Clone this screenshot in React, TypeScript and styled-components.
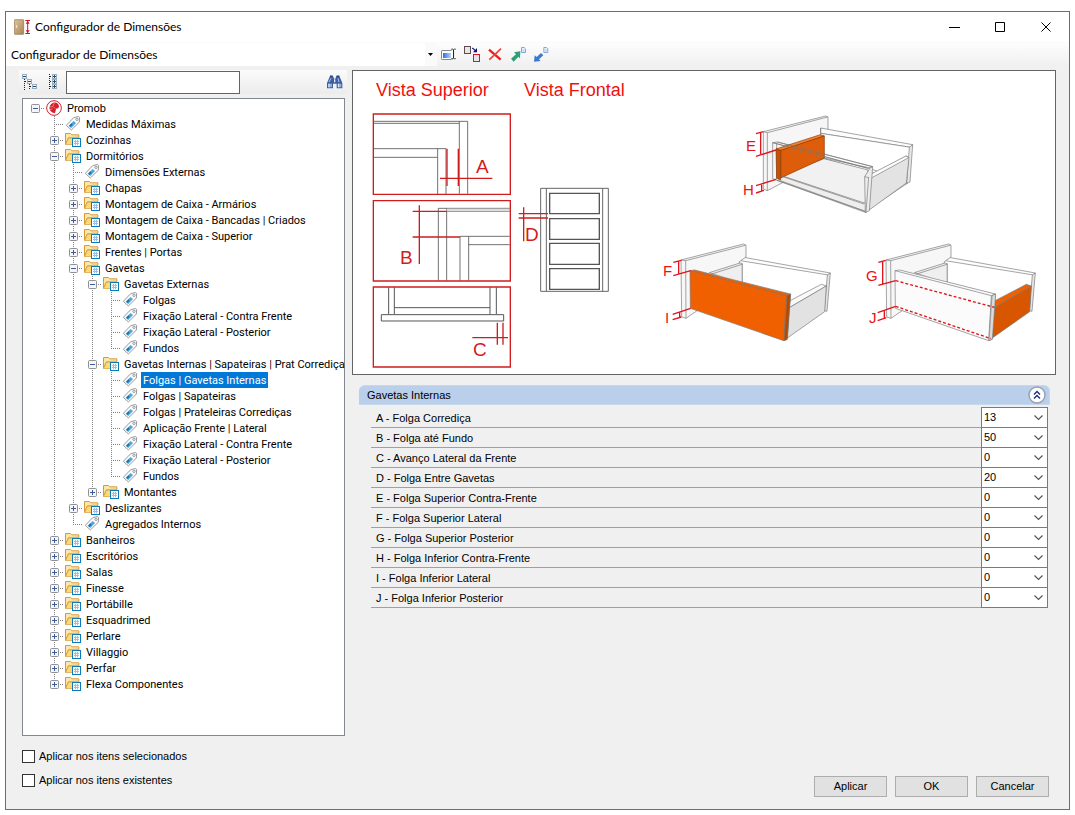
import React, { useState } from 'react';
import styled, { createGlobalStyle } from 'styled-components';

const GlobalStyle = createGlobalStyle`
  *, *::before, *::after { box-sizing: border-box; }
  body {
    margin: 0;
    background: #fff;
    color: #000;
    font: 11px/16px "Liberation Sans", Arial, sans-serif;
  }
  button, input, select { font: inherit; color: inherit; margin: 0; }
`;

const captionFont = 'Lato, "Segoe UI", sans-serif';
const treeFont = 'Roboto, Arial, sans-serif';

/* ---------- window frame ---------- */

const Page = styled.div`
  display: flex;
  min-height: 100vh;
  padding: 11px 5px 5px;
`;

const Window = styled.main`
  flex: 1;
  min-width: 0;
  display: flex;
  flex-direction: column;
  border: 1px solid #1883d7;
  background: #f0f0f0;
`;

const TitleBar = styled.header`
  display: flex;
  align-items: center;
  height: 30px;
  padding-left: 8px;
  background: #fff;
`;

const Title = styled.h1`
  flex: 1;
  margin: 0 0 0 4px;
  font: 12px/16px ${captionFont};
`;

const CaptionButton = styled.button`
  width: 46px;
  height: 30px;
  padding: 0;
  border: 0;
  background: transparent;
  display: grid;
  place-items: center;
  &:hover { background: #e5e5e5; }
`;

const Toolbar = styled.div`
  display: flex;
  align-items: flex-start;
  height: 24px;
  border-top: 1px solid #fafafa;
  background: linear-gradient(#fdfdfd, #f0f0f0);
`;

const ConfigField = styled.div`
  display: grid;
  width: 431px;
  height: 23px;
  align-items: center;
  background: linear-gradient(90deg, #fff 419px, #fafafa 419px);
  > * { grid-area: 1 / 1; }
  > svg { justify-self: end; margin-right: 4px; pointer-events: none; }
`;

const ConfigSelect = styled.select`
  appearance: none;
  height: 23px;
  padding: 0 20px 0 5px;
  border: 0;
  outline: 0;
  background: transparent;
  font: 12px/23px ${captionFont};
`;

const IconButton = styled.button`
  flex: none;
  width: 23px;
  height: 23px;
  padding: 0;
  border: 0;
  background: transparent;
  svg { display: block; width: 23px; height: 23px; }
`;

/* ---------- body ---------- */

const Body = styled.div`
  flex: 1;
  display: grid;
  grid-template-columns: 328px minmax(0, 1fr);
  column-gap: 5px;
  padding: 4px 13px 12px;
`;

const Sidebar = styled.section`
  display: flex;
  flex-direction: column;
  padding-bottom: 5px;
`;

const SearchStrip = styled.form`
  display: flex;
  align-items: flex-start;
  height: 24px;
  margin-bottom: 4px;
  padding-right: 1px;
  background: linear-gradient(#fbfbfb, #ececec);
`;

const SearchInput = styled.input`
  width: 174px;
  height: 23px;
  margin: 1px auto 0 1px;
  padding: 0 4px;
  border: 1px solid #646464;
  background: #fff;
  outline: 0;
`;

const TreeBox = styled.div`
  flex: 1;
  margin: 0 2px 8px 3px;
  padding: 1px 0 8px 3px;
  border: 1px solid #828790;
  background: #fff;
  font-family: ${treeFont};
`;

const TreeRow = styled.div`
  display: flex;
  height: 16px;
  white-space: nowrap;
  > svg { flex: none; margin: 0 3px 0 1px; }
`;

type GuideKind = 'none' | 'full' | 'upper';

const guideHeight = { none: '0', full: '100%', upper: '9px' };

const Guide = styled.span<{ $kind: GuideKind; $branch?: boolean }>`
  flex: none;
  display: grid;
  place-items: center;
  width: 19px;
  height: 16px;
  background-repeat: no-repeat;
  background-image:
    repeating-linear-gradient(#808080 0 1px, transparent 1px 2px),
    repeating-linear-gradient(90deg, #808080 0 1px, transparent 1px 2px);
  background-position: 9px 0, 9px 8px;
  background-size:
    1px ${(p) => guideHeight[p.$kind]},
    ${(p) => (p.$branch ? '11px' : '0')} 1px;
`;

const Expander = styled.button`
  display: block;
  width: 9px;
  height: 9px;
  padding: 0;
  border: 0;
  background: transparent;
  svg { display: block; }
`;

const NodeLabel = styled.button<{ $selected: boolean }>`
  height: 16px;
  padding: 2px 2px 0;
  border: 0;
  line-height: 14px;
  background: ${(p) => (p.$selected ? '#0078d7' : 'transparent')};
  color: ${(p) => (p.$selected ? '#fff' : '#000')};
`;

const CheckRow = styled.label`
  display: flex;
  align-items: center;
  gap: 4px;
  height: 24px;
  margin-left: 3px;
`;

const CheckBox = styled.input`
  appearance: none;
  width: 13px;
  height: 13px;
  border: 1px solid #333;
  background: #fff;
  &:checked { background: #333; box-shadow: inset 0 0 0 2px #fff; }
`;

const Content = styled.section`
  display: flex;
  flex-direction: column;
  min-width: 0;
`;

const Figure = styled.figure`
  margin: 0 0 10px;
  border: 1px solid #646464;
  background: #fff;
  overflow: hidden;
  svg { display: block; }
`;

const PropertyGroup = styled.section`
  margin: 0 6px 20px 7px;
`;

const GroupHeader = styled.div`
  display: flex;
  align-items: center;
  justify-content: space-between;
  height: 20px;
  padding: 0 3px 0 8px;
  border: 1px solid #c6d8ee;
  border-width: 1px 1px 1px 0;
  border-radius: 6px 6px 0 0;
  background: #b9cfea;
`;

const GroupTitle = styled.h2`
  margin: 0;
  font-size: 11px;
  font-weight: 400;
`;

const RoundButton = styled.button`
  width: 18px;
  height: 18px;
  padding: 0;
  border: 0;
  background: transparent;
  svg { display: block; }
`;

const PropertyList = styled.div`
  margin: 3px 2px 0 12px;
`;

const PropertyRow = styled.div`
  display: flex;
  align-items: center;
  height: 20px;
  border-bottom: 1px solid #a0a0a0;
`;

const PropertyName = styled.label`
  flex: 1;
  padding-left: 5px;
`;

const ValueField = styled.div`
  display: grid;
  align-items: center;
  width: 67px;
  height: 21px;
  margin: -1px 0;
  > * { grid-area: 1 / 1; }
  > svg { justify-self: end; margin-right: 5px; pointer-events: none; }
`;

const ValueSelect = styled.select`
  appearance: none;
  width: 67px;
  height: 21px;
  padding: 0 0 1px 2px;
  border: 1px solid #7a7a7a;
  border-radius: 0;
  background: #fff;
  outline: 0;
`;

const ButtonBar = styled.footer`
  display: flex;
  justify-content: flex-end;
  gap: 8px;
  margin-top: auto;
  padding-right: 7px;
`;

const DialogButton = styled.button`
  width: 73px;
  height: 21px;
  padding: 0 0 2px;
  border: 1px solid #adadad;
  background: #e1e1e1;
`;

/* ---------- icons ---------- */

const AppIcon = () => (
  <svg width="17" height="16" viewBox="0 0 51 48" aria-hidden="true">
    <defs>
      <linearGradient id="door" x1="0" y1="0" x2="1" y2="1">
        <stop offset="0" stopColor="#e0c49c" />
        <stop offset="1" stopColor="#ab8456" />
      </linearGradient>
    </defs>
    <rect x="1" y="2" width="28" height="44" rx="2" fill="url(#door)" stroke="#8c6f4c" strokeWidth="2" />
    <path d="M8 18v9" stroke="#f6ead8" strokeWidth="3" />
    <path d="M34 4.500h14M34 43.500h14M41 5v38" stroke="#d4112d" strokeWidth="3" fill="none" />
    <path d="M35 14h12l-6-8zM35 34h12l-6 8z" fill="#d4112d" />
  </svg>
);

const PageGlyph = ({ x, y }: { x: number; y: number }) => (
  <g transform={`translate(${x} ${y})`}>
    <path d="M1.500 1.500h8l4 4v11h-12z" fill="#eaf2fd" stroke="#82a6d8" strokeWidth="3" />
    <path d="M5 9h5M5 12h5" stroke="#82a6d8" strokeWidth="1.500" />
  </g>
);

const RenameIcon = () => (
  <svg viewBox="0 0 69 69">
    <defs>
      <linearGradient id="ren">
        <stop offset="0" stopColor="#2f6fe0" />
        <stop offset="1" stopColor="#b9d2fa" />
      </linearGradient>
    </defs>
    <rect x="13.500" y="22.500" width="37" height="27" rx="2" fill="#fff" stroke="#7f8794" strokeWidth="3" />
    <rect x="18" y="30" width="24" height="15" fill="url(#ren)" />
    <path d="M43 19.500h13M43 46.500h13M49.500 20v26" fill="none" stroke="#fff" strokeWidth="7" />
    <path d="M43 18.500h4l2.500 2 2.500-2h4M43 47h4l2.500-2 2.500 2h4M49.500 20v26" fill="none" stroke="#222" strokeWidth="3" />
  </svg>
);

const DuplicateIcon = () => (
  <svg viewBox="0 0 69 69">
    <rect x="13.500" y="10.500" width="18" height="21" fill="#e6e6ea" stroke="#5c4c4c" strokeWidth="3" />
    <path d="M36 16h4v3h4v4h4" fill="none" stroke="#10107c" strokeWidth="3" />
    <path d="M51 15v13H39z" fill="#10107c" />
    <rect x="40.500" y="34.500" width="18" height="21" fill="#e6e6ea" stroke="#e0141c" strokeWidth="3" />
  </svg>
);

const DeleteIcon = () => (
  <svg viewBox="0 0 69 69">
    <path d="M18 20l35 30" stroke="#f01c1c" strokeWidth="7" />
    <path d="M54 17L36 34 19 50" stroke="#f04040" strokeWidth="5" fill="none" />
  </svg>
);

const ExportIcon = () => (
  <svg viewBox="0 0 69 69">
    <path d="M43 25L24 28l6 6-15 13 8 9 14-15 5 5z" fill="#2f9e74" />
    <PageGlyph x={45} y={12} />
  </svg>
);

const ImportIcon = () => (
  <svg viewBox="0 0 69 69">
    <path d="M15 56l2-19 6 5 13-12 7 7-13 12 5 5z" fill="#3d78d0" />
    <PageGlyph x={43} y={12} />
  </svg>
);

const Box = ({ x, y, plus }: { x: number; y: number; plus?: boolean }) => (
  <g transform={`translate(${x} ${y})`}>
    <rect x="1.500" y="1.500" width="12" height="12" fill="#f4f7fa" stroke="#9aaebd" strokeWidth="3" />
    <path d={plus ? 'M3 7.500h9M7.500 3v9' : 'M3 7.500h9'} stroke="#2a4a6a" strokeWidth="3" />
  </g>
);

const CollapseTreeIcon = () => (
  <svg viewBox="0 0 69 69">
    <path d="M16.500 27v33M31.500 42v18M18 34.500h6M33 49.500h6" stroke="#222" strokeWidth="3" strokeDasharray="3 3" />
    <Box x={9} y={12} />
    <Box x={24} y={27} />
    <Box x={39} y={42} />
  </svg>
);

const ExpandTreeIcon = () => (
  <svg viewBox="0 0 69 69">
    <path d="M22.500 12v48M24 19.500h6M24 34.500h6M24 49.500h6" stroke="#222" strokeWidth="3" strokeDasharray="3 3" />
    <Box x={30} y={12} plus />
    <Box x={30} y={27} plus />
    <Box x={30} y={42} plus />
  </svg>
);

const FindIcon = () => (
  <svg viewBox="0 0 69 69">
    <path d="M21 18h9l3 8h4l3-8h9l9 21v16H41V41H30v14H12V39z" fill="#3b5f9f" />
    <path d="M15 41h12v11H15zM44 41h11v11H44z" fill="#8fabdb" />
    <path d="M18 41v11M47 41v11" stroke="#e6eefb" strokeWidth="3" />
    <path d="M24 25l-6 11M45 25l3 11" stroke="#b5c9ea" strokeWidth="3" />
    <path d="M33 28h4v9h-4z" fill="#dfe8f6" />
    <path d="M21 18h8M41 18h8" stroke="#1c3264" strokeWidth="3" />
  </svg>
);

const FolderIcon = () => (
  <svg width="16" height="16" viewBox="0 0 48 48" aria-hidden="true">
    <path d="M1.500 37V4.500h15l4 4h21v9H10z" fill="#fbe7a6" stroke="#d59a3a" strokeWidth="3" />
    <path d="M2 37.500l8-19h10l3-3h17v22z" fill="#fdd874" stroke="#d59a3a" strokeWidth="2" />
    <rect x="22.500" y="19.500" width="24" height="24" fill="#fff" stroke="#0a7ab8" strokeWidth="3" />
    <path d="M27 28.500h15M27 34.500h15M31.500 24v16M37.500 24v16" stroke="#9dbfe4" strokeWidth="3" />
  </svg>
);

const TagIcon = () => (
  <svg width="16" height="16" viewBox="0 0 48 48" aria-hidden="true">
    <path d="M26 5l14-3.500 4 3-1 14L19 42 4 28z" fill="#fafafa" stroke="#868686" strokeWidth="2.500" strokeLinejoin="round" />
    <circle cx="36" cy="10" r="3.500" fill="#fff" stroke="#868686" strokeWidth="2.500" />
    <path d="M26 15l7 6-14 15-8-7z" fill="#45a9e4" />
    <path d="M19 22l4 4-7 7-3-4z" fill="#1f6dac" />
  </svg>
);

const PromobIcon = () => (
  <svg width="16" height="16" viewBox="0 0 48 48" aria-hidden="true">
    <circle cx="24" cy="24" r="22" fill="#fff" stroke="#d4202c" strokeWidth="3" />
    <path d="M22 8c9-3 17 4 17 11 0 6-5 7-9 7-1 5-1 9-4 14-7-1-13-5-15-12-2-9 3-17 11-20z" fill="#d4202c" />
    <path d="M25 9l-4 10-9 2M22 20l6 6M12 29l8-3" fill="none" stroke="#f5a5aa" strokeWidth="2" />
  </svg>
);

const ExpanderGlyph = ({ open }: { open: boolean }) => (
  <svg width="9" height="9" viewBox="0 0 9 9">
    <rect x=".5" y=".5" width="8" height="8" rx="1" fill="#f6f6f6" stroke="#919191" />
    <path d={open ? 'M2 4.500h5' : 'M2 4.500h5M4.500 2v5'} stroke="#3b5aa8" />
  </svg>
);

const Chevron = () => (
  <svg width="9" height="6" viewBox="0 0 9 6" aria-hidden="true">
    <path d="M.5.5l4 4 4-4" fill="none" stroke="#555" strokeWidth="1.200" />
  </svg>
);

/* ---------- illustration ---------- */

const Drawer = ({ highlight }: { highlight: 'side' | 'back' }) => {
  const orange = '#f06000';
  const side = highlight === 'side';
  const back = highlight === 'back';
  return (
    <g fill="#fdfdfd" stroke="#777" strokeWidth="2" strokeLinejoin="round">
      <path d="M265 79l276 50-6 6-270-44z" />
      <path d="M541 129l-10 115-8-2 9-107z" fill="#e4e4e4" />
      <path d="M93 90l188-48 7 3v36l-20 14v60L108 265l-13-4z" fill="#f7f7f7" />
      <path d="M107 92l179-46M107 92l1 173M93 90l14 2" fill="none" />
      <path d="M178 128l92-29 7 2v54l-7 3z" fill="#efefef" />
      <path d="M182 133l94-30" fill="none" />
      <path d="M270 158l7-3v-54l110 80-210-51z" fill="#fff" stroke="none" />
      <path d="M277 101v56" fill="none" />
      <path d="M420 212l94-49 15 5-113 66z" fill={back ? orange : '#fafafa'} />
      <path d="M416 234l113-66-5 77-112 79z" fill={back ? '#d85600' : '#e2e2e2'} />
      <path d="M120 122l14-2 287 72-10 136-10 4L121 235z" fill={side ? orange : '#fbfbfb'} />
      <path d="M120 122l289 75 12-5M409 197l-8 134" fill="none" />
      <path d="M411 197l11-5-10 136-10 4z" fill={side ? '#b84a00' : '#dcdcdc'} />
    </g>
  );
};

const InnerDrawer = () => (
  <g fill="#fdfdfd" stroke="#777" strokeWidth="2" strokeLinejoin="round">
    <path d="M100 95l187-47 7 3v125L112 272l-12-5z" fill="#f6f6f6" />
    <path d="M112 98l181-47M112 98v174M100 95l12 3" fill="none" />
    <path d="M272 84l276 50-6 8-270-42z" />
    <path d="M272 84v88l140 30 120 48 10-108-270-42" fill="#fff" />
    <path d="M548 134l-8 112-10 4 8-108z" fill="#e8e8e8" />
    <path d="M152 226l130-50 250 74-126 84-260-94z" fill="#eee" />
    <path d="M152 226l130-50 132 34-8 100z" fill="#f1f1f1" />
    <path d="M128 128l14-2 286 74-14 5zM128 128v108l280 102M140 130v108" fill="none" />
    <path d="M414 232l115-64 8 5-8 76-121 88z" fill="#e3e3e3" />
    <path d="M408 230l120-62 8 5-114 62z" />
    <path d="M138 147l133-43 12 4-129 44z" fill="#f38132" stroke="#8c3a00" />
    <path d="M152 151l131-43v66l-131 60z" fill="#dd5d0b" stroke="#8c3a00" />
    <path d="M138 147l14 4v88l-12-4z" fill="#c65003" stroke="#8c3a00" />
    <path d="M128 128l286 77M142 126l286 74M152 228l250 84M140 241l266 93" fill="none" />
    <path d="M404 230l16-26 8-4-10 132-12 6z" fill="#ececec" />
    <path d="M416 232l-8 104M404 230l12 3" fill="none" />
  </g>
);

const Illustration = () => (
  <svg width="702" height="303" viewBox="0 0 702 303" role="img" aria-label="Vista superior e frontal das folgas de gavetas">
    <g transform="translate(7 -1) scale(.33333)" fill="none">
      <path d="M42 154h281v217M42 160h255M298 154v217M42 236h216M42 262h190M233 236v136M258 236v136" stroke="#555" strokeWidth="2.500" />
      <path d="M235 632V415h214M260 415v217M260 424h189M300 632V499h149M326 499v133M326 524h123" stroke="#555" strokeWidth="2.500" />
      <path d="M260 416h189v8H260z" fill="#ddd" />
      <path d="M86 652v81M103 652v81M390 652v81M409 652v81M103 713h287M64 734h367v19H64z" stroke="#555" strokeWidth="3" />
      <path d="M542 355h203v309H542zM559 355v309M728 355v309" stroke="#666" strokeWidth="3" />
      <path d="M569 370h149v61H569zM569 446h149v62H569zM569 520h149v63H569zM569 596h149v62H569z" stroke="#555" strokeWidth="4" />
      <g stroke="#cf1d1d" strokeWidth="4">
        <path d="M40 132h411v241H40zM40 392h411v241H40zM40 651h411v240H40z" />
        <path d="M261 236v112M295 236v112M240 325h157M178 406v176M158 424h102M158 501h142M412 758v66M429 758v66M337 803h107M491 412v102M476 431h88M476 444h88" />
      </g>
    </g>
    <g transform="translate(377 29) scale(.33333)">
      <InnerDrawer />
      <path d="M78 101l22-6M78 169l60-19M92 98v64M78 257l60-19M78 279l24-8M95 254v18" stroke="#e0141c" strokeWidth="4" />
    </g>
    <g transform="translate(297 159) scale(.33333)">
      <Drawer highlight="side" />
      <path d="M70 97l24-6M70 137l52-15M86 94v38M68 253l54-18M68 269l26-8M89 246v18" stroke="#e0141c" strokeWidth="4" />
    </g>
    <g transform="translate(502 159) scale(.33333)">
      <Drawer highlight="back" />
      <path d="M122 152l296 80M122 229l286 97" stroke="#e0141c" strokeWidth="4" strokeDasharray="9 6" />
      <path d="M70 97l22-6M70 166l52-14M83 94v68M68 248l54-19M68 272l26-9M88 242v23" stroke="#e0141c" strokeWidth="4" />
    </g>
    <g fill="#f01010" fontFamily='"Liberation Sans", Arial, sans-serif' fontSize="18">
      <text x="23" y="25">Vista Superior</text>
      <text x="171" y="25">Vista Frontal</text>
    </g>
    <g fill="#d41c1c" fontFamily='"Liberation Sans", Arial, sans-serif' fontSize="19">
      <text x="123" y="102">A</text>
      <text x="47" y="193">B</text>
      <text x="120" y="285">C</text>
      <text x="172" y="170">D</text>
    </g>
    <g fill="#e81414" fontFamily='"Liberation Sans", Arial, sans-serif' fontSize="15">
      <text x="393" y="80">E</text>
      <text x="390" y="124">H</text>
      <text x="310" y="205">F</text>
      <text x="312" y="252">I</text>
      <text x="513" y="210">G</text>
      <text x="516" y="252">J</text>
    </g>
  </svg>
);

/* ---------- data ---------- */

type TreeNode = { id: string; name: string; folder?: boolean; children?: TreeNode[] };

const leaf = (id: string, name: string): TreeNode => ({ id, name });
const folder = (id: string, name: string, children?: TreeNode[]): TreeNode => ({ id, name, folder: true, children });

const root = folder('promob', 'Promob', [
  leaf('max', 'Medidas Máximas'),
  folder('coz', 'Cozinhas'),
  folder('dor', 'Dormitórios', [
    leaf('dor-ext', 'Dimensões Externas'),
    folder('chapas', 'Chapas'),
    folder('cx-arm', 'Montagem de Caixa - Armários'),
    folder('cx-ban', 'Montagem de Caixa - Bancadas | Criados'),
    folder('cx-sup', 'Montagem de Caixa - Superior'),
    folder('frentes', 'Frentes | Portas'),
    folder('gav', 'Gavetas', [
      folder('gav-ext', 'Gavetas Externas', [
        leaf('ge-folgas', 'Folgas'),
        leaf('ge-contra', 'Fixação Lateral - Contra Frente'),
        leaf('ge-post', 'Fixação Lateral - Posterior'),
        leaf('ge-fundos', 'Fundos'),
      ]),
      folder('gav-int', 'Gavetas Internas | Sapateiras | Prat Corrediça', [
        leaf('gi-gav', 'Folgas | Gavetas Internas'),
        leaf('gi-sap', 'Folgas | Sapateiras'),
        leaf('gi-prat', 'Folgas | Prateleiras Corrediças'),
        leaf('gi-apl', 'Aplicação Frente | Lateral'),
        leaf('gi-contra', 'Fixação Lateral - Contra Frente'),
        leaf('gi-post', 'Fixação Lateral - Posterior'),
        leaf('gi-fundos', 'Fundos'),
      ]),
      folder('mont', 'Montantes'),
    ]),
    folder('desl', 'Deslizantes'),
    leaf('agr', 'Agregados Internos'),
  ]),
  folder('ban', 'Banheiros'),
  folder('esc', 'Escritórios'),
  folder('sal', 'Salas'),
  folder('fin', 'Finesse'),
  folder('por', 'Portábille'),
  folder('esq', 'Esquadrimed'),
  folder('perl', 'Perlare'),
  folder('vil', 'Villaggio'),
  folder('perf', 'Perfar'),
  folder('flexa', 'Flexa Componentes'),
]);

const properties: [string, number][] = [
  ['A - Folga Corrediça', 13],
  ['B - Folga até Fundo', 50],
  ['C - Avanço Lateral da Frente', 0],
  ['D - Folga Entre Gavetas', 20],
  ['E - Folga Superior Contra-Frente', 0],
  ['F - Folga Superior Lateral', 0],
  ['G - Folga Superior Posterior', 0],
  ['H - Folga Inferior Contra-Frente', 0],
  ['I - Folga Inferior Lateral', 0],
  ['J - Folga Inferior Posterior', 0],
];

/* ---------- components ---------- */

type BranchProps = {
  node: TreeNode;
  guides: boolean[];
  last: boolean;
  selected: string;
  onSelect: (id: string) => void;
};

const Branch = ({ node, guides, last, selected, onSelect }: BranchProps) => {
  const [open, setOpen] = useState(Boolean(node.children));
  const isRoot = guides.length === 0;
  return (
    <>
      <TreeRow
        role="treeitem"
        aria-level={guides.length + 1}
        aria-selected={selected === node.id}
        aria-expanded={node.folder ? open : undefined}
      >
        {guides.map((on, i) => (
          <Guide key={i} $kind={on ? 'full' : 'none'} />
        ))}
        <Guide $kind={isRoot ? 'none' : last ? 'upper' : 'full'} $branch>
          {node.folder && (
            <Expander aria-label={`${open ? 'Recolher' : 'Expandir'} ${node.name}`} onClick={() => setOpen(!open)}>
              <ExpanderGlyph open={open} />
            </Expander>
          )}
        </Guide>
        {isRoot ? <PromobIcon /> : node.folder ? <FolderIcon /> : <TagIcon />}
        <NodeLabel $selected={selected === node.id} onClick={() => onSelect(node.id)}>
          {node.name}
        </NodeLabel>
      </TreeRow>
      {open &&
        node.children?.map((child, i) => (
          <Branch
            key={child.id}
            node={child}
            guides={[...guides, !isRoot && !last]}
            last={i === node.children!.length - 1}
            selected={selected}
            onSelect={onSelect}
          />
        ))}
    </>
  );
};

const ValueRow = ({ id, name, value }: { id: string; name: string; value: number }) => (
  <PropertyRow>
    <PropertyName htmlFor={id}>{name}</PropertyName>
    <ValueField>
      <ValueSelect id={id} defaultValue={value}>
        <option>{value}</option>
      </ValueSelect>
      <Chevron />
    </ValueField>
  </PropertyRow>
);

export default function App() {
  const [selected, setSelected] = useState('gi-gav');
  const [showGroup, setShowGroup] = useState(true);

  return (
    <Page>
      <GlobalStyle />
      <Window>
        <TitleBar>
          <AppIcon />
          <Title>Configurador de Dimensões</Title>
          <CaptionButton aria-label="Minimizar">
            <svg width="11" height="11" viewBox="0 0 11 11"><path d="M0 5.500h11" stroke="#000" /></svg>
          </CaptionButton>
          <CaptionButton aria-label="Maximizar">
            <svg width="11" height="11" viewBox="0 0 11 11"><path d="M.5.5h9v9h-9z" stroke="#000" fill="none" /></svg>
          </CaptionButton>
          <CaptionButton aria-label="Fechar">
            <svg width="11" height="11" viewBox="0 0 11 11"><path d="M.5.5l9 9M9.500.5l-9 9" stroke="#000" /></svg>
          </CaptionButton>
        </TitleBar>

        <Toolbar>
          <ConfigField>
            <ConfigSelect aria-label="Configurador">
              <option>Configurador de Dimensões</option>
            </ConfigSelect>
            <svg width="5" height="3" viewBox="0 0 5 3"><path d="M0 0h5L2.500 3z" /></svg>
          </ConfigField>
          <IconButton aria-label="Renomear"><RenameIcon /></IconButton>
          <IconButton aria-label="Duplicar"><DuplicateIcon /></IconButton>
          <IconButton aria-label="Excluir"><DeleteIcon /></IconButton>
          <IconButton aria-label="Exportar"><ExportIcon /></IconButton>
          <IconButton aria-label="Importar"><ImportIcon /></IconButton>
        </Toolbar>

        <Body>
          <Sidebar>
            <SearchStrip role="search" onSubmit={(e) => e.preventDefault()}>
              <IconButton type="button" aria-label="Recolher tudo"><CollapseTreeIcon /></IconButton>
              <IconButton type="button" aria-label="Expandir tudo"><ExpandTreeIcon /></IconButton>
              <SearchInput type="text" aria-label="Localizar" />
              <IconButton type="submit" aria-label="Localizar"><FindIcon /></IconButton>
            </SearchStrip>
            <TreeBox role="tree">
              <Branch node={root} guides={[]} last selected={selected} onSelect={setSelected} />
            </TreeBox>
            <CheckRow>
              <CheckBox type="checkbox" />
              Aplicar nos itens selecionados
            </CheckRow>
            <CheckRow>
              <CheckBox type="checkbox" />
              Aplicar nos itens existentes
            </CheckRow>
          </Sidebar>

          <Content>
            <Figure>
              <Illustration />
            </Figure>
            <PropertyGroup>
              <GroupHeader>
                <GroupTitle>Gavetas Internas</GroupTitle>
                <RoundButton aria-label="Recolher grupo" onClick={() => setShowGroup(!showGroup)}>
                  <svg width="18" height="18" viewBox="0 0 18 18">
                    <circle cx="9" cy="9" r="8" fill="#fff" stroke="#9aa0b4" strokeWidth="1.500" />
                    <path d="M6 8.500l3-3 3 3M6 12.500l3-3 3 3" fill="none" stroke="#1c2c78" strokeWidth="1.400" />
                  </svg>
                </RoundButton>
              </GroupHeader>
              {showGroup && (
                <PropertyList>
                  {properties.map(([name, value]) => (
                    <ValueRow key={name} id={`prop-${name[0]}`} name={name} value={value} />
                  ))}
                </PropertyList>
              )}
            </PropertyGroup>
            <ButtonBar>
              <DialogButton>Aplicar</DialogButton>
              <DialogButton>OK</DialogButton>
              <DialogButton>Cancelar</DialogButton>
            </ButtonBar>
          </Content>
        </Body>
      </Window>
    </Page>
  );
}
